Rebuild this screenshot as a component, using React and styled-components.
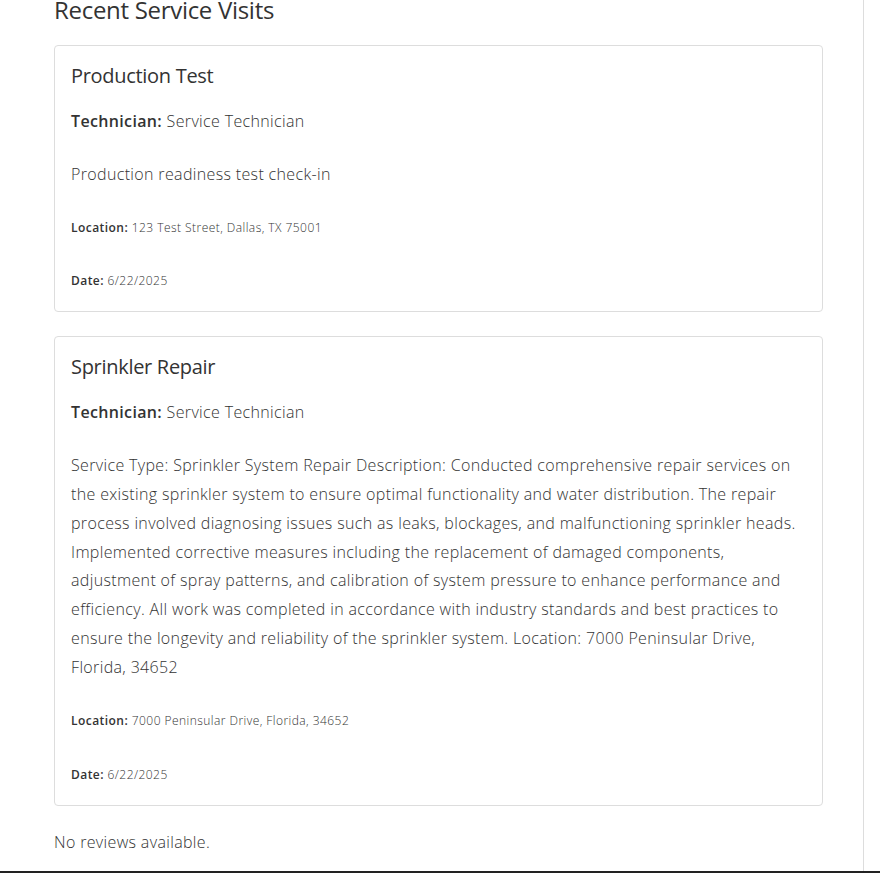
import React from 'react';
import styled, { createGlobalStyle } from 'styled-components';

const GlobalStyle = createGlobalStyle`
    html, body {
        margin: 0;
        padding: 0;
        background: #ffffff;
    }

    body {
        font-family: "Open Sans", "Liberation Sans", sans-serif;
        font-weight: 300;
        color: #333333;
        overflow: hidden;
    }
`;

const visits = [
    {
        title: 'Production Test',
        technician: 'Service Technician',
        description: 'Production readiness test check-in',
        location: '123 Test Street, Dallas, TX 75001',
        date: '6/22/2025',
    },
    {
        title: 'Sprinkler Repair',
        technician: 'Service Technician',
        description: 'Service Type: Sprinkler System Repair Description: Conducted comprehensive repair services on the existing sprinkler system to ensure optimal functionality and water distribution. The repair process involved diagnosing issues such as leaks, blockages, and malfunctioning sprinkler heads. Implemented corrective measures including the replacement of damaged components, adjustment of spray patterns, and calibration of system pressure to enhance performance and efficiency. All work was completed in accordance with industry standards and best practices to ensure the longevity and reliability of the sprinkler system. Location: 7000 Peninsular Drive, Florida, 34652',
        location: '7000 Peninsular Drive, Florida, 34652',
        date: '6/22/2025',
    },
];

const App = () => {
    return (
        <Pagina>
            <GlobalStyle />
            <Columna>
                <Titulo>Recent Service Visits</Titulo>
                {visits.map((visit) => (
                    <Tarjeta key={visit.title}>
                        <TituloTarjeta>{visit.title}</TituloTarjeta>
                        <Parrafo><strong>Technician:</strong> {visit.technician}</Parrafo>
                        <Parrafo>{visit.description}</Parrafo>
                        <Meta><strong>Location:</strong> {visit.location}</Meta>
                        <Meta><strong>Date:</strong> {visit.date}</Meta>
                    </Tarjeta>
                ))}
                <SinResenas>No reviews available.</SinResenas>
            </Columna>
        </Pagina>
    );
}

const Pagina = styled.div`
    height: 873px;
    display: flex;
    flex-direction: column;
    border-bottom: 2px solid #222222;
    box-sizing: border-box;
`;

const Columna = styled.div`
    flex: 1;
    width: 864px;
    box-sizing: border-box;
    padding: 0 40px 0 54px;
    border-right: 1px solid #dddddd;
    overflow: hidden;
`;

const Titulo = styled.h2`
    margin: -4px 0 20px;
    font-size: 24px;
    font-weight: 400;
    line-height: 1.2;
    letter-spacing: -0.3px;
`;

const Tarjeta = styled.div`
    border: 1px solid #dddddd;
    border-radius: 4px;
    padding: 16px;
    margin-bottom: 24px;
`;

const TituloTarjeta = styled.h3`
    margin: 0 0 17px;
    font-size: 20px;
    font-weight: 400;
    line-height: 1.4;
    letter-spacing: -0.3px;
`;

const Parrafo = styled.p`
    margin: 0 0 24px;
    font-size: 16px;
    line-height: 1.8;
    letter-spacing: 0.35px;

    strong {
        font-weight: 600;
    }
`;

const Meta = styled.p`
    margin: 25.5px 0 0;
    font-size: 12px;
    line-height: 28px;
    letter-spacing: 0.45px;

    strong {
        font-weight: 600;
    }
`;

const SinResenas = styled.p`
    margin: -2px 0 0;
    font-size: 16px;
    line-height: 1.8;
    letter-spacing: 0.35px;
`;

export default App;
